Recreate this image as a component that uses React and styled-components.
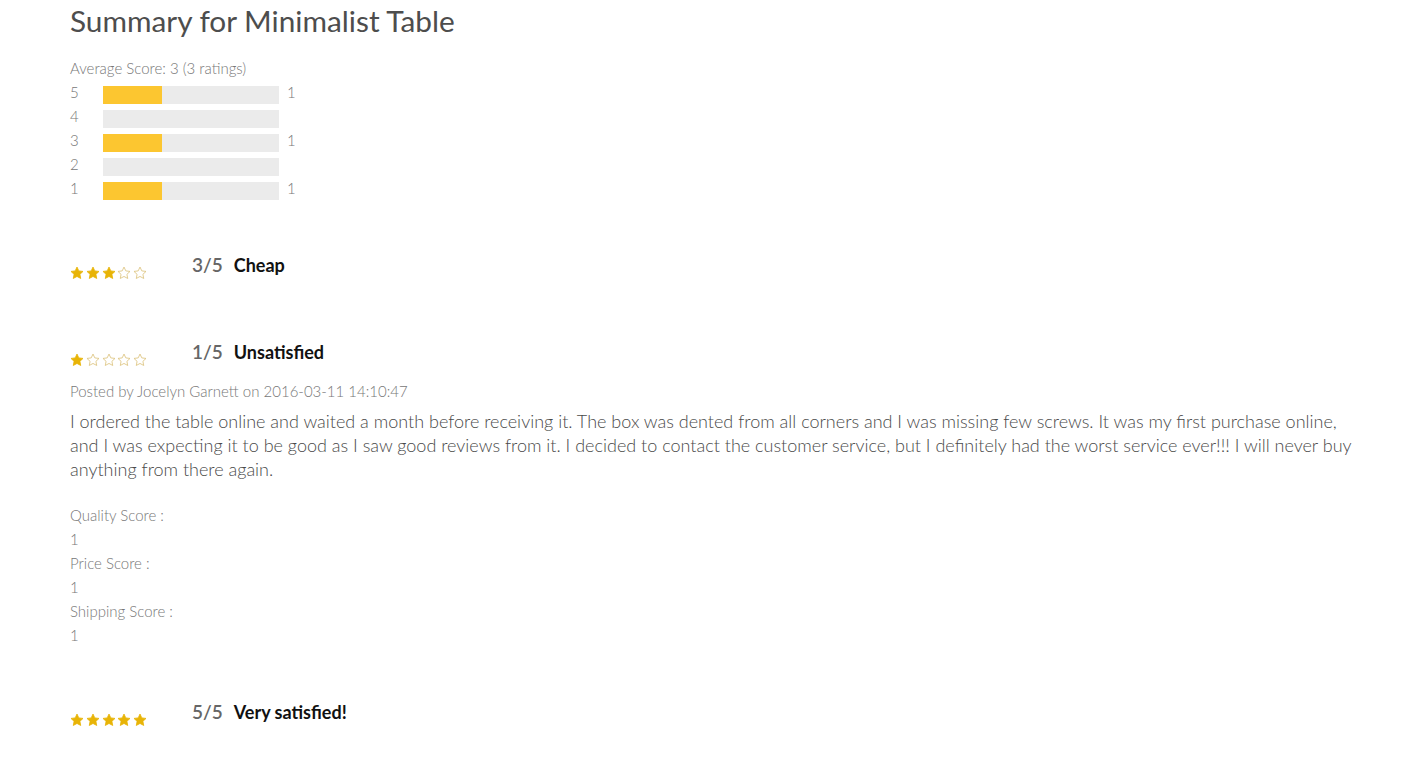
import styled, { createGlobalStyle } from 'styled-components';

const GlobalStyle = createGlobalStyle`
  body {
    margin: 0;
    background: #fff;
    font-family: Lato, "Open Sans", sans-serif;
  }
`;

const summary = [
  { stars: 5, count: 1 },
  { stars: 4, count: 0 },
  { stars: 3, count: 1 },
  { stars: 2, count: 0 },
  { stars: 1, count: 1 },
];

const reviews = [
  { score: 3, title: 'Cheap' },
  {
    score: 1,
    title: 'Unsatisfied',
    author: 'Jocelyn Garnett',
    date: '2016-03-11 14:10:47',
    text: 'I ordered the table online and waited a month before receiving it. The box was dented from all corners and I was missing few screws. It was my first purchase online, and I was expecting it to be good as I saw good reviews from it. I decided to contact the customer service, but I definitely had the worst service ever!!! I will never buy anything from there again.',
    details: [
      { label: 'Quality Score', value: 1 },
      { label: 'Price Score', value: 1 },
      { label: 'Shipping Score', value: 1 },
    ],
  },
  { score: 5, title: 'Very satisfied!' },
];

const Star = ({ filled }) => (
  <svg width="14" height="14" viewBox="0 0 24 24">
    <path
      d="M12 1.8l3.1 6.6 7.2.9-5.3 5 1.4 7.1L12 17.9l-6.4 3.5 1.4-7.1-5.3-5 7.2-.9z"
      fill={filled ? '#e8b407' : '#fff'}
      stroke={filled ? '#e8b407' : '#dcc27a'}
      strokeWidth="1.4"
      strokeLinejoin="round"
    />
  </svg>
);

const App = () => {
  const total = summary.reduce((a, s) => a + s.count, 0);
  return (
    <>
      <GlobalStyle />
      <Page>
        <Title>Summary for Minimalist Table</Title>
        <Average>Average Score: 3 (3 ratings)</Average>
        <Bars>
          {summary.map((s) => (
            <BarRow key={s.stars}>
              <BarLabel>{s.stars}</BarLabel>
              <Track>
                <Fill style={{ width: `${(s.count / total) * 100}%` }} />
              </Track>
              <BarCount>{s.count > 0 ? s.count : ''}</BarCount>
            </BarRow>
          ))}
        </Bars>

        {reviews.map((r, i) => (
          <Review key={i} $compact={!r.author}>
            <ReviewHead>
              <Stars>
                {[1, 2, 3, 4, 5].map((n) => (
                  <Star key={n} filled={n <= r.score} />
                ))}
              </Stars>
              <Score>{r.score}/5</Score>
              <ReviewTitle>{r.title}</ReviewTitle>
            </ReviewHead>
            {r.author && (
              <>
                <Posted>
                  Posted by {r.author} on {r.date}
                </Posted>
                <Body>{r.text}</Body>
                <Details>
                  {r.details.map((d) => (
                    <div key={d.label}>
                      <DetailLine>{d.label} :</DetailLine>
                      <DetailLine>{d.value}</DetailLine>
                    </div>
                  ))}
                </Details>
              </>
            )}
          </Review>
        ))}
      </Page>
    </>
  );
};

const Page = styled.div`
  padding: 0 70px 40px;
  color: #555;
`;

const Title = styled.h1`
  margin: 0;
  padding-top: 3px;
  font-size: 29.8px;
  font-weight: 400;
  line-height: 36px;
  color: #4d4d4d;
`;

const Average = styled.div`
  margin-top: 19px;
  font-size: 15px;
  font-weight: 300;
  line-height: 20px;
  color: #777;
`;

const Bars = styled.div`
  display: flex;
  flex-direction: column;
  gap: 6px;
  margin-top: 8px;
`;

const BarRow = styled.div`
  display: flex;
  align-items: center;
  height: 18px;
  font-size: 15px;
  font-weight: 300;
  line-height: 18px;
  color: #777;
`;

const BarLabel = styled.span`
  width: 33px;
  margin-top: -7px;
`;

const Track = styled.div`
  width: 176px;
  height: 18px;
  background: #ebebeb;
`;

const Fill = styled.div`
  height: 100%;
  background: #fcc630;
`;

const BarCount = styled.span`
  margin-left: 8px;
  margin-top: -7px;
`;

const Review = styled.div`
  margin-top: 53px;
  padding-bottom: ${(p) => (p.$compact ? '7px' : '0')};
`;

const ReviewHead = styled.div`
  display: flex;
  align-items: flex-start;
  line-height: 24px;
`;

const Stars = styled.div`
  display: flex;
  gap: 1.8px;
  width: 122px;
  margin-top: 13px;
`;

const Score = styled.span`
  font-size: 19px;
  font-weight: 600;
  color: #666;
  margin-right: 11px;
`;

const ReviewTitle = styled.span`
  font-size: 18px;
  font-weight: 700;
  color: #111;
`;

const Posted = styled.div`
  margin-top: 14px;
  font-size: 15px;
  font-weight: 300;
  line-height: 20px;
  color: #777;
`;

const Body = styled.p`
  margin: 8px 0 0;
  font-size: 18px;
  font-weight: 300;
  line-height: 24px;
  color: #4a4a4a;
`;

const Details = styled.div`
  margin-top: 22px;
`;

const DetailLine = styled.div`
  font-size: 15px;
  font-weight: 300;
  line-height: 24px;
  color: #777;
`;

export default App;
